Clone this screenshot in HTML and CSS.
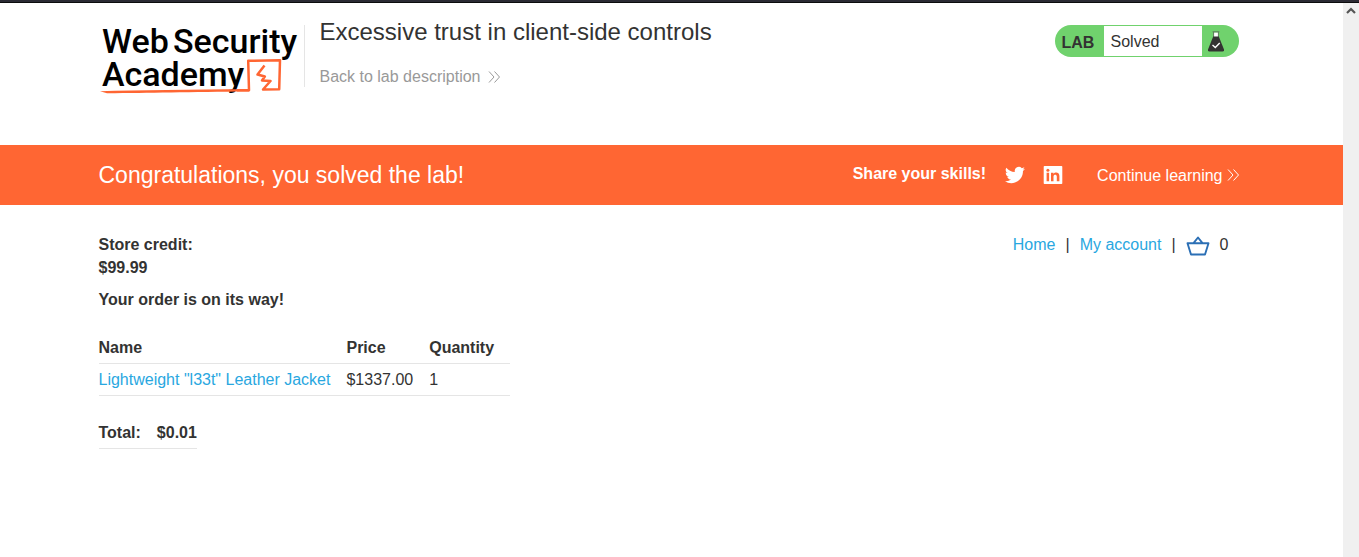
FILE: index.html
```html
<!DOCTYPE html>
<html lang="en">
<head>
<meta charset="utf-8">
<title>Excessive trust in client-side controls</title>
<link rel="stylesheet" href="styles.css">
</head>
<body>
<div class="window-edge"></div>
<div class="viewport">
  <div class="page">
    <header class="lab-header">
      <div class="container lab-header-row">
        <a class="logo" href="#" aria-label="Web Security Academy">
          <svg width="204" height="76" viewBox="0 0 204 76">
            <g class="logo-text">
              <text x="3" y="32">Web</text>
              <text x="74" y="32">Security</text>
              <text x="3" y="65">Academy</text>
            </g>
            <path d="M1 70.2C40 69 90 68.5 150 68.2V70.6C90 71.2 50 72 8 72.3Z" fill="#ff6633"/>
            <path d="M138 69.3L150 69.2L149.2 39.8L181 39.3L180.2 68.2L164 68.5L171.5 60L163 59.5L165.8 55.5L158.5 53.5L165.5 44.5" fill="none" stroke="#ff6633" stroke-width="2.5" stroke-linejoin="round"/>
          </svg>
        </a>
        <div class="title">
          <h2>Excessive trust in client-side controls</h2>
          <a class="back" href="#">Back to lab description
            <svg width="12" height="12" viewBox="0 0 12 12"><path d="M1 .5L6 6L1 11.5M6.5 .5L11.5 6L6.5 11.5"/></svg>
          </a>
        </div>
        <div class="status">
          <span class="status-label">LAB</span>
          <p>Solved</p>
          <svg class="flask" width="16" height="21" viewBox="0 0 16 21">
            <path d="M5.5 1.5h5v5h-5z" fill="#fff"/>
            <path d="M4.6 .8h6.8M5.6 1v5M10.4 1v5" stroke="#5c7a5a" fill="none"/>
            <path d="M5.2 5.5h5.6L16 18.5Q16.2 20.5 14.5 20.5H1.5Q-.2 20.5 0 18.5Z" fill="#333332"/>
            <path d="M4.5 14L7.3 16.5L11.7 12" fill="none" stroke="#fff" stroke-width="1.4"/>
          </svg>
        </div>
      </div>
    </header>
    <section class="banner">
      <div class="container banner-row">
        <h4>Congratulations, you solved the lab!</h4>
        <span class="share">Share your skills!</span>
        <a class="twitter" href="#" aria-label="Twitter">
          <svg width="20" height="20" viewBox="0 0 24 24"><path fill="#fff" d="M23.95 4.57a10 10 0 0 1-2.82.77 4.96 4.96 0 0 0 2.16-2.72c-.95.55-2 .95-3.12 1.18a4.92 4.92 0 0 0-8.39 4.48C7.69 8.09 4.07 6.13 1.64 3.16a4.9 4.9 0 0 0 1.52 6.57 4.9 4.9 0 0 1-2.23-.61v.06a4.92 4.92 0 0 0 3.95 4.83 5 5 0 0 1-2.21.08 4.94 4.94 0 0 0 4.6 3.42A9.87 9.87 0 0 1 0 19.54a13.99 13.99 0 0 0 7.55 2.21c9.05 0 14-7.5 14-13.98 0-.21 0-.42-.02-.63a9.94 9.94 0 0 0 2.42-2.57z"/></svg>
        </a>
        <a class="linkedin" href="#" aria-label="LinkedIn">
          <svg width="20" height="20" viewBox="0 0 20 20"><path fill="#fff" fill-rule="evenodd" d="M1.5 1h17q.8 0 .8.8v16.4q0 .8-.8.8h-17q-.8 0-.8-.8V1.8Q.7 1 1.5 1zM3.6 7.8v8.4h2.5V7.8zM8 7.8v8.4h2.5v-4.6c0-2.4 3.3-2.5 3.3 0v4.6h2.6V11c0-4-4.4-4.2-5.9-2.1V7.8z"/><circle cx="4.9" cy="5.2" r="1.5" fill="#ff6633"/></svg>
        </a>
        <a class="continue" href="#">Continue learning
          <svg width="12" height="12" viewBox="0 0 12 12"><path d="M1 .5L6 6L1 11.5M6.5 .5L11.5 6L6.5 11.5"/></svg>
        </a>
      </div>
    </section>
    <main class="container shop">
      <div class="order">
        <p class="credit"><strong>Store credit:<br>$99.99</strong></p>
        <p class="message"><strong>Your order is on its way!</strong></p>
        <table class="items">
          <thead><tr><th>Name</th><th>Price</th><th>Quantity</th></tr></thead>
          <tbody><tr><td><a href="#">Lightweight "l33t" Leather Jacket</a></td><td>$1337.00</td><td>1</td></tr></tbody>
        </table>
        <table class="total">
          <tbody><tr><th>Total:</th><th>$0.01</th></tr></tbody>
        </table>
      </div>
      <nav class="links">
        <a href="#">Home</a><span>|</span><a href="#">My account</a><span>|</span>
        <a class="basket" href="#" aria-label="Basket">
          <svg width="24" height="20" viewBox="0 0 24 20"><path d="M1.5 7.2H22.5L19 18.5H5ZM7.5 7.2L12 1.5L16.5 7.2" fill="none" stroke="#2b6fb5" stroke-width="1.9" stroke-linejoin="round"/></svg>
        </a>
        <b>0</b>
      </nav>
    </main>
  </div>
  <div class="scrollbar">
    <svg width="10" height="8" viewBox="0 0 10 8"><path d="M1 6L5 2L9 6" fill="none" stroke="#555" stroke-width="2.2"/></svg>
  </div>
</div>
</body>
</html>
```
FILE: styles.css
```css
* { box-sizing: border-box; }
body {
  margin: 0;
  min-height: 100vh;
  display: flex;
  flex-direction: column;
  background: #fff;
  color: #333332;
  font: 16px/23px "Liberation Sans", Arial, sans-serif;
}
h2, h4, p { margin: 0; font-weight: 400; }
a { color: #29a7df; text-decoration: none; }
svg { display: block; flex: none; }
.window-edge { height: 3px; background: #2b2a33; border-bottom: 1px solid #0c0c0d; }
.viewport { flex: 1; display: flex; }
.page { flex: 1; }
.scrollbar {
  width: 16px;
  padding-top: 4px;
  background: #f0f0f0;
  display: flex;
  justify-content: center;
}
.container { max-width: 1146px; margin: 0 auto; padding-right: 6px; }

.lab-header-row { display: flex; align-items: flex-start; height: 142px; padding-top: 18px; }
.logo { width: 205px; }
.logo-text { font: 500 34px Roboto, sans-serif; fill: #000; }
.title { flex: 1; border-left: 1px solid #e5e5e5; margin-top: 4px; padding-left: 15px; height: 62px; }
.title h2 { font-size: 24px; line-height: 28px; margin-top: -7px; }
.back { display: flex; align-items: center; gap: 8px; margin-top: 19px; color: #999; }
.back path, .continue path { fill: none; stroke: currentColor; stroke-width: 1; }
.status {
  display: flex;
  align-items: center;
  height: 32px;
  margin-top: 4px;
  padding: 1px 15px 1px 7px;
  border-radius: 16px;
  background: #70d26d;
}
.status-label { width: 42px; padding-top: 2px; font-weight: 700; }
.status p { width: 98px; height: 30px; padding-left: 7px; line-height: 31px; background: #fff; }
.flask { margin-left: 6px; }

.banner { background: #ff6633; color: #fff; }
.banner a { color: #fff; }
.banner-row { display: flex; align-items: center; height: 60px; }
.banner h4 { flex: 1; font-size: 23px; }
.share { font-weight: 700; padding-bottom: 3px; }
.twitter { margin-left: 19px; }
.linkedin { margin: 0 34px 0 18px; }
.continue { display: flex; align-items: center; gap: 4px; }

.shop { display: flex; justify-content: space-between; align-items: flex-start; padding-top: 28px; }
.message { margin-top: 9px; }
table { border-collapse: separate; border-spacing: 0; }
th { text-align: left; }
.items { margin-top: 21px; }
.items th, .items td { height: 32px; padding: 0 16px 0 0; border-bottom: 1px solid #e5e5e5; }
.total { margin-top: 21px; }
.total th { height: 32px; padding: 0; border-bottom: 1px solid #e5e5e5; }
.total th + th { padding-left: 16px; }
.links { display: flex; align-items: center; margin-right: 10px; }
.links span { margin: 0 10px; }
.links .basket { margin-right: 10px; padding-top: 2px; }
.links b { font-weight: 400; }
```
